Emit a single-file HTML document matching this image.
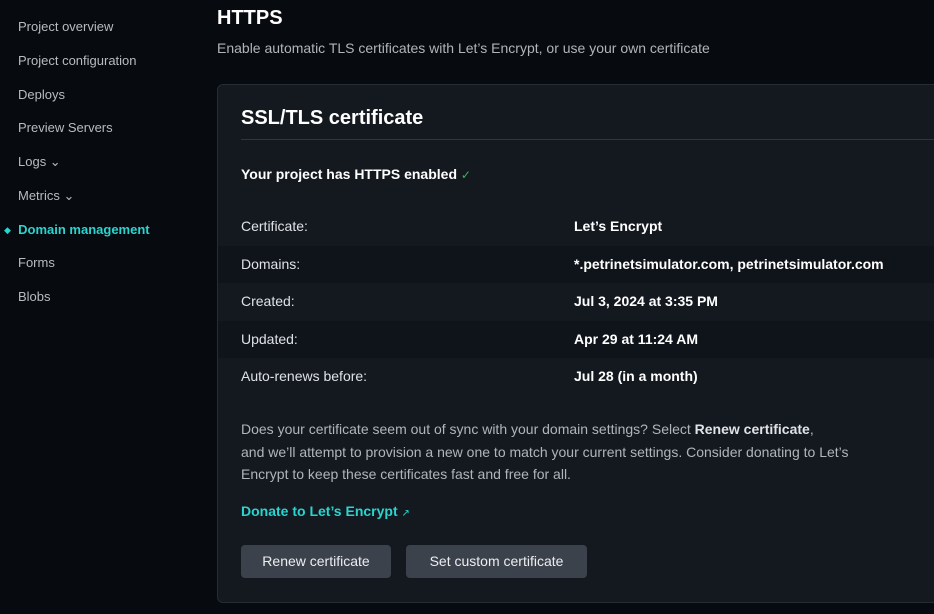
<!DOCTYPE html><html><head><style>
body{margin:0;width:934px;height:614px;background:#070a0e;font-family:"Liberation Sans","DejaVu Sans",sans-serif;color:#e8eaed;overflow:hidden;position:relative}
.nav{position:absolute;left:18px;top:0}
.nav div{position:absolute;white-space:nowrap;font-size:13px;color:#b8bcc2}
.nav .act{color:#2ad4cf;font-weight:bold}
h1{position:absolute;left:217px;top:7px;margin:0;font-size:20px;font-weight:bold;color:#fff}
.sub{position:absolute;left:217px;top:40px;font-size:14px;color:#b0b5bb}
.card{position:absolute;left:217px;top:84px;width:740px;height:517px;background:#141920;border:1px solid #262c34;border-radius:6px}
.t{position:absolute;left:23px;top:22px;font-size:20px;font-weight:bold;color:#fff}
.hr{position:absolute;left:23px;right:0;top:54px;border-top:1px solid #30363e}
.row{position:absolute;left:0;right:0;height:37px;font-size:14px}
.row span{position:absolute;top:10px;left:23px;color:#dfe2e6}
.row b{position:absolute;top:10px;left:356px;color:#fff}
.s{background:#0f141a}
.p{position:absolute;left:23px;top:333px;width:618px;font-size:14px;line-height:22.5px;color:#b0b5bb}
.btn{position:absolute;top:460px;height:33px;background:#3c424b;border-radius:4px;font-size:14px;color:#eceef0;line-height:33px;text-align:center}
</style></head><body>
<div class="nav">
<div style="top:19px">Project overview</div>
<div style="top:53px">Project configuration</div>
<div style="top:87px">Deploys</div>
<div style="top:120px">Preview Servers</div>
<div style="top:154px">Logs ⌄</div>
<div style="top:188px">Metrics ⌄</div>
<div class="act" style="top:222px;left:-14px"><span style="font-size:9px;position:relative;top:-1px">◆</span>&nbsp; Domain management</div>
<div style="top:255px">Forms</div>
<div style="top:289px">Blobs</div>
</div>
<h1>HTTPS</h1>
<div class="sub">Enable automatic TLS certificates with Let’s Encrypt, or use your own certificate</div>
<div class="card">
<div class="t">SSL/TLS certificate</div>
<div class="hr"></div>
<div style="position:absolute;left:23px;top:81px;font-size:14px;font-weight:bold;color:#fff">Your project has HTTPS enabled <span style="color:#3bb55a;font-weight:normal;font-size:12px">✓</span></div>
<div class="row" style="top:123px"><span>Certificate:</span><b>Let’s Encrypt</b></div>
<div class="row s" style="top:161px"><span>Domains:</span><b>*.petrinetsimulator.com, petrinetsimulator.com</b></div>
<div class="row" style="top:198px"><span>Created:</span><b>Jul 3, 2024 at 3:35 PM</b></div>
<div class="row s" style="top:236px"><span>Updated:</span><b>Apr 29 at 11:24 AM</b></div>
<div class="row" style="top:273px"><span>Auto-renews before:</span><b>Jul 28 (in a month)</b></div>
<div class="p">Does your certificate seem out of sync with your domain settings? Select <b style="color:#e0e3e6">Renew certificate</b>,<br>and we’ll attempt to provision a new one to match your current settings. Consider donating to Let’s Encrypt to keep these certificates fast and free for all.</div>
<div style="position:absolute;left:23px;top:418px;font-size:14px;font-weight:bold;color:#2ad4cf">Donate to Let’s Encrypt <span style="font-size:10px;font-weight:normal">↗</span></div>
<div class="btn" style="left:23px;width:150px">Renew certificate</div>
<div class="btn" style="left:188px;width:181px">Set custom certificate</div>
</div>
</body></html>
